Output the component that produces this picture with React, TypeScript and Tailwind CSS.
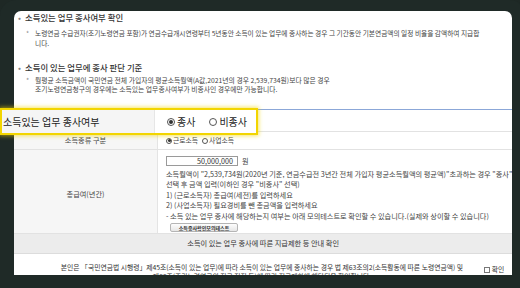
import React from "react";

function Radio({ checked, size = "sm" }: { checked?: boolean; size?: "sm" | "lg" }) {
  const outer =
    size === "lg"
      ? "w-[8px] h-[8px] border-[1px]"
      : "w-[6px] h-[6px] border-[0.8px]";
  const inner = size === "lg" ? "w-[4px] h-[4px]" : "w-[3px] h-[3px]";
  return (
    <span
      className={`${outer} inline-flex items-center justify-center rounded-full border-[#555] bg-white shrink-0`}
    >
      {checked && <span className={`${inner} rounded-full bg-[#333]`} />}
    </span>
  );
}

export default function App() {
  return (
    <div
      className="w-[520px] h-[288px] relative overflow-hidden bg-[#1e2825] flex"
      style={{ fontFamily: '"Noto Sans CJK KR", "Noto Sans", sans-serif' }}
    >
      {/* light edge of the desk on the left */}
      <div className="w-[7px] mt-[16px] mb-[14px] bg-gradient-to-b from-[#9fa3a1] via-[#e3e4e3] to-[#c4c7c5]" />

      {/* tablet bezel */}
      <div className="flex-1 pl-[14px] pr-[12px] pt-[11px] pb-[13px] bg-[#1f2a27] rounded-tl-[16px] rounded-tr-[14px]">
        <div className="w-full h-full bg-white rounded-t-[7px] overflow-hidden flex flex-col text-[#444]">
          {/* notice section */}
          <div className="pl-[4px] pr-[8px]">
            <div className="flex items-center h-[12px] text-[8.4px] text-[#333] font-medium">
              <span className="w-[7px] text-[#888]">•</span>
              소득있는 업무 종사여부 확인
            </div>
            <div className="flex mt-[5px] pl-[8px] text-[6.7px] leading-[10px]">
              <span className="w-[9px] shrink-0 text-[#888]">*</span>
              <p className="whitespace-nowrap">
                노령연금 수급권자(조기노령연금 포함)가 연금수급개시연령부터 5년동안 소득이 있는 업무에 종사하는 경우 그 기간동안 기본연금액의 일정 비율을 감액하여 지급합
                <br />
                니다.
              </p>
            </div>
            <div className="flex items-center h-[12px] mt-[13px] text-[8.4px] text-[#333] font-medium">
              <span className="w-[7px] text-[#888]">•</span>
              소득이 있는 업무에 종사 판단 기준
            </div>
            <div className="flex mt-[3px] pl-[8px] text-[6.8px] leading-[8.5px]">
              <span className="w-[9px] shrink-0 text-[#888]">*</span>
              <p className="whitespace-nowrap">
                월평균 소득금액이 국민연금 전체 가입자의 평균소득월액(A값,2021년의 경우 2,539,734원)보다 많은 경우
                <br />
                조기노령연금청구의 경우에는 소득있는 업무종사여부가 비종사인 경우에만 가능합니다.
              </p>
            </div>
          </div>

          {/* form table */}
          <div className="mt-[16px] border-t border-[#8ba7d8] text-[7.2px]">
            {/* first row sits under the magnified callout */}
            <div className="flex h-[22px] border-b border-[#e2e2e2]">
              <div className="w-[144px] bg-[#f6f6f6] border-r border-[#e4e4e4]" />
              <div className="flex-1" />
            </div>

            <div className="flex h-[18px] border-b border-[#e2e2e2]">
              <div className="w-[144px] bg-[#f6f6f6] border-r border-[#e4e4e4] flex items-center justify-center">
                소득종류 구분
              </div>
              <div className="flex-1 flex items-center gap-[4px] pl-[8px] text-[6.8px]">
                <span className="flex items-center gap-[1px]">
                  <Radio checked />
                  근로소득
                </span>
                <span className="flex items-center gap-[1px]">
                  <Radio />
                  사업소득
                </span>
              </div>
            </div>

            <div className="flex h-[84px] border-b border-[#e2e2e2]">
              <div className="w-[144px] bg-[#f6f6f6] border-r border-[#e4e4e4] flex items-center justify-center pt-[5px]">
                총급여(년간)
              </div>
              <div className="flex-1 pl-[8px] pt-[6px]">
                <div className="flex items-center">
                  <div className="w-[72px] h-[10px] border border-[#9a9a9a] bg-white flex items-center justify-end pr-[4px] text-[7.2px] text-[#333]">
                    50,000,000
                  </div>
                  <span className="ml-[4px]">원</span>
                </div>
                <div className="mt-[2px] leading-[10.5px] whitespace-nowrap">
                  <p>
                    소득월액이 "2,539,734원(2020년 기준, 연금수급전 3년간 전체 가입자 평균소득월액의 평균액)"초과하는 경우 "종사"
                  </p>
                  <p>선택 후 금액 입력(이하인 경우 "비종사" 선택)</p>
                  <p>1) (근로소득자) 총급여(세전)를 입력하세요</p>
                  <p>2) (사업소득자) 필요경비를 뺀 총금액을 입력하세요</p>
                  <p>
                    - 소득 있는 업무 종사에 해당하는지 여부는 아래 모의테스트로 확인할 수 있습니다.(실제와 상이할 수 있습니다)
                  </p>
                </div>
                <button className="mt-[2px] ml-[4px] w-[68px] h-[9px] border border-[#b5b5b5] rounded-[2px] bg-gradient-to-b from-[#fdfdfd] to-[#e6e6e6] text-[5px] font-bold text-[#333] flex items-center justify-center">
                  소득종사확인모의테스트
                </button>
              </div>
            </div>

            <div className="h-[20px] bg-[#ececec] border-b border-[#dcdcdc] flex items-center justify-center text-[#333]">
              소득이 있는 업무 종사에 따른 지급제한 등 안내 확인
            </div>

            <div className="flex items-start pt-[9px] text-[#333] text-[6.8px]">
              <p className="flex-1 text-center leading-[8.5px] pl-[30px] whitespace-nowrap">
                본인은 「국민연금법 시행령」제45조(소득이 있는 업무)에 따라 소득이 있는 업무에 종사하는 경우 법 제63조의2(소득활동에 따른 노령연금액) 및
                <br />
                제66조(조기노령연금의 지급 정지 등)에 따라 지급제한에 해당됨을 확인합니다.
              </p>
              <span className="flex items-center gap-[2px] pr-[8px] pl-[4px] mt-[3px] leading-[7px]">
                <span className="w-[6px] h-[6px] border border-[#777] bg-white" />
                확인
              </span>
            </div>
          </div>
        </div>
      </div>

      {/* magnified callout of the first row */}
      <div className="absolute left-0 top-[108px] w-[258px] h-[27px] border-2 border-[#f2d500] shadow-[0_0_4px_1px_rgba(242,213,0,0.6)] flex bg-white">
        <div className="w-[153px] bg-[#f5f5f5] border-r border-[#e6e6e6] flex items-center pl-[1px] text-[10px] text-[#1c1c1c]">
          소득있는 업무 종사여부
        </div>
        <div className="flex-1 flex items-center pl-[12px] gap-[14px] text-[10px] text-[#1c1c1c]">
          <span className="flex items-center gap-[2px]">
            <Radio checked size="lg" />
            종사
          </span>
          <span className="flex items-center gap-[2px]">
            <Radio size="lg" />
            비종사
          </span>
        </div>
      </div>
    </div>
  );
}
